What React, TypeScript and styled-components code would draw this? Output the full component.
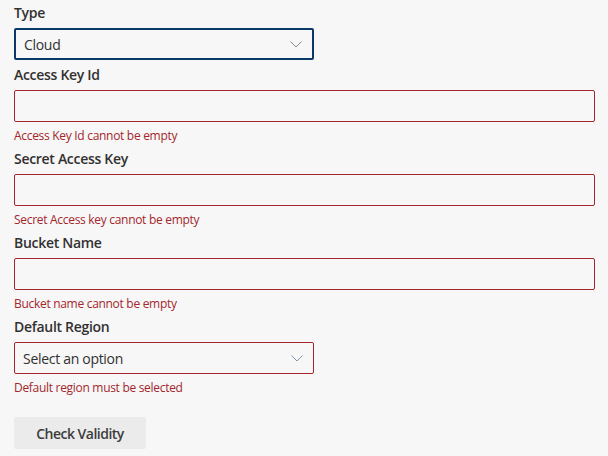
import React from 'react'
import styled, { createGlobalStyle } from 'styled-components'

const GlobalStyle = createGlobalStyle`
  html, body {
    margin: 0;
    background: #f7f7f7;
  }
  body {
    font-family: 'Segoe UI', 'Open Sans', 'Noto Sans', 'Liberation Sans', sans-serif;
    color: #323130;
    letter-spacing: -0.3px;
    -webkit-font-smoothing: antialiased;
  }
`

const Form = styled.form`
  display: flex;
  flex-direction: column;
  padding: 0 13px 0 14px;
  margin-top: -2px;
`

const Field = styled.div<{ $narrow?: boolean }>`
  display: flex;
  flex-direction: column;
  width: ${({ $narrow }) => ($narrow ? '300px' : '100%')};
`

const Label = styled.label`
  font-size: 14px;
  font-weight: 600;
  line-height: 20px;
  padding: 5px 0;
  color: #323130;
`

const TextBox = styled.input<{ $invalid?: boolean }>`
  box-sizing: border-box;
  height: 32px;
  width: 100%;
  margin: 0;
  padding: 0 8px;
  background: #f7f7f7;
  border: 1px solid ${({ $invalid }) => ($invalid ? '#a4262c' : '#8a8886')};
  border-radius: 2px;
  font: inherit;
  font-size: 14px;
  outline: none;
`

const Select = styled.div<{ $focused?: boolean; $invalid?: boolean }>`
  box-sizing: border-box;
  height: 32px;
  display: flex;
  align-items: center;
  justify-content: space-between;
  padding: 0 10px 0 8px;
  border-radius: 2px;
  border: ${({ $focused, $invalid }) =>
    $focused ? '2px solid #0b3a69' : $invalid ? '1px solid #a4262c' : '1px solid #8a8886'};
  font-size: 14px;
  color: #323130;
`

const Chevron = styled.svg`
  width: 12px;
  height: 7px;
  flex: none;
`

const ErrorText = styled.div`
  font-size: 12px;
  line-height: 16px;
  padding: 6px 0 0;
  color: #a4262c;
`

const Actions = styled.div`
  padding-top: 21px;
`

const Button = styled.button`
  box-sizing: border-box;
  height: 32px;
  width: 132px;
  border: none;
  border-radius: 2px;
  background: #ebebeb;
  color: #3c3c3c;
  font: inherit;
  font-size: 14px;
  font-weight: 600;
  letter-spacing: -0.5px;
  padding: 0 16px;
`

const Dropdown = ({
  value,
  focused,
  invalid,
}: {
  value: string
  focused?: boolean
  invalid?: boolean
}) => (
  <Select $focused={focused} $invalid={invalid}>
    <span>{value}</span>
    <Chevron viewBox="0 0 12 7" fill="none">
      <path
        d="M0.5 0.5 L6 6 L11.5 0.5"
        stroke={invalid ? '#7f95b3' : '#8a8a8a'}
        strokeWidth="1"
      />
    </Chevron>
  </Select>
)

const fields = [
  { label: 'Access Key Id', error: 'Access Key Id cannot be empty' },
  { label: 'Secret Access Key', error: 'Secret Access key cannot be empty' },
  { label: 'Bucket Name', error: 'Bucket name cannot be empty' },
]

export default function App() {
  return (
    <>
      <GlobalStyle />
      <Form onSubmit={(e) => e.preventDefault()}>
        <Field $narrow>
          <Label>Type</Label>
          <Dropdown value="Cloud" focused />
        </Field>
        {fields.map((f) => (
          <Field key={f.label}>
            <Label>{f.label}</Label>
            <TextBox $invalid aria-label={f.label} />
            <ErrorText>{f.error}</ErrorText>
          </Field>
        ))}
        <Field $narrow>
          <Label>Default Region</Label>
          <Dropdown value="Select an option" invalid />
          <ErrorText>Default region must be selected</ErrorText>
        </Field>
        <Actions>
          <Button type="button">Check Validity</Button>
        </Actions>
      </Form>
    </>
  )
}
